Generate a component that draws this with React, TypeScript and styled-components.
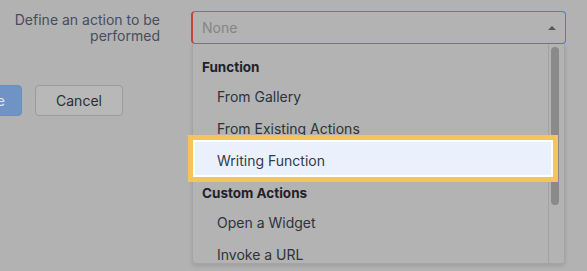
import styled, { createGlobalStyle } from "styled-components";

const GlobalStyle = createGlobalStyle`
  html, body {
    margin: 0;
    padding: 0;
    background: #b2b2b2;
    overflow: hidden;
  }
  body {
    font-family: Inter, "Noto Sans", "Liberation Sans", sans-serif;
    font-size: 14px;
  }
`;

const menu = [
  { group: "Function", items: ["From Gallery", "From Existing Actions", "Writing Function"] },
  { group: "Custom Actions", items: ["Open a Widget", "Invoke a URL"] },
];

const ActionField = () => {
  return (
    <SelectWrap>
      <SelectBox>
        <Placeholder>None</Placeholder>
        <Caret viewBox="0 0 8 4" width="8" height="4">
          <path d="M0 4 L4 0 L8 4 Z" fill="#595959" />
        </Caret>
      </SelectBox>
      <Dropdown>
        <List>
          {menu.map((g) => (
            <div key={g.group}>
              <GroupTitle>{g.group}</GroupTitle>
              {g.items.map((item) => (
                <Item key={item} $active={item === "Writing Function"}>
                  {item}
                </Item>
              ))}
            </div>
          ))}
        </List>
        <ScrollTrack>
          <ScrollThumb />
        </ScrollTrack>
      </Dropdown>
    </SelectWrap>
  );
};

function App() {
  return (
    <>
      <GlobalStyle />
      <Page>
        <LeftColumn>
          <Label>
            Define an action to be
            <br />
            performed
          </Label>
          <ButtonRow>
            <PrimaryButton>Save</PrimaryButton>
            <SecondaryButton>Cancel</SecondaryButton>
          </ButtonRow>
        </LeftColumn>
        <ActionField />
      </Page>
    </>
  );
}

const Page = styled.div`
  display: flex;
  flex-direction: row;
  width: 587px;
  height: 271px;
  padding-top: 11px;
  box-sizing: border-box;
`;

const LeftColumn = styled.div`
  width: 191px;
  flex-shrink: 0;
  display: flex;
  flex-direction: column;
`;

const Label = styled.div`
  width: 160px;
  text-align: right;
  color: #474d5e;
  line-height: 16px;
  padding-top: 1px;
`;

const ButtonRow = styled.div`
  display: flex;
  gap: 13px;
  margin-top: 41px;
  margin-left: -48px;
`;

const PrimaryButton = styled.button`
  width: 70px;
  height: 31px;
  border: 1px solid #6a8dba;
  border-radius: 4px;
  background: #6e93c4;
  color: #dfe6ef;
  font: inherit;
  text-align: right;
  padding: 0 16px 0 0;
`;

const SecondaryButton = styled.button`
  width: 88px;
  height: 31px;
  border: 1px solid #9b9b9b;
  border-radius: 4px;
  background: #b8b8b8;
  color: #2b2e36;
  font: inherit;
  font-size: 14px;
`;

const SelectWrap = styled.div`
  position: relative;
  width: 375px;
`;

const SelectBox = styled.div`
  height: 33px;
  box-sizing: border-box;
  display: flex;
  align-items: center;
  justify-content: space-between;
  border: 1px solid #5b7ab8;
  border-left: 2px solid #c2453b;
  border-radius: 4px;
  padding: 0 9px 0 9px;
  background: #b3b3b3;
`;

const Placeholder = styled.span`
  color: #858585;
  font-size: 14px;
`;

const Caret = styled.svg`
  display: block;
`;

const Dropdown = styled.div`
  position: absolute;
  top: 33px;
  left: 1px;
  width: 373px;
  height: 220px;
  box-sizing: border-box;
  display: flex;
  border: 1px solid #a4a4a4;
  border-top: none;
  border-radius: 0 0 4px 4px;
  background: #b3b3b3;
  box-shadow: 0 2px 4px rgba(0, 0, 0, 0.12);
`;

const List = styled.div`
  flex: 1;
  padding-top: 6px;
`;

const GroupTitle = styled.div`
  height: 30px;
  box-sizing: border-box;
  padding: 9px 0 0 9px;
  font-weight: 700;
  font-size: 13.5px;
  color: #1f2229;
  line-height: 16px;
`;

const Item = styled.div<{ $active?: boolean }>`
  position: relative;
  z-index: 1;
  height: 32px;
  display: flex;
  align-items: center;
  padding-left: 24px;
  color: ${(p) => (p.$active ? "#343a49" : "#2e323c")};
  font-size: 14px;

  ${(p) =>
    p.$active &&
    `
    &::before {
      content: "";
      position: absolute;
      z-index: -1;
      top: -9px;
      bottom: -6px;
      left: -5px;
      right: -10px;
      border: 5px solid #f6c35d;
      background: #eaf1fd;
      box-shadow: inset 0 0 0 2px #ffffff;
    }
  `}
`;

const ScrollTrack = styled.div`
  width: 13px;
  border-left: 1px solid #a2a2a2;
  padding: 3px 0 0 2px;
`;

const ScrollThumb = styled.div`
  width: 8px;
  height: 158px;
  border-radius: 4px;
  background: #8a8a8a;
`;

export default App;
